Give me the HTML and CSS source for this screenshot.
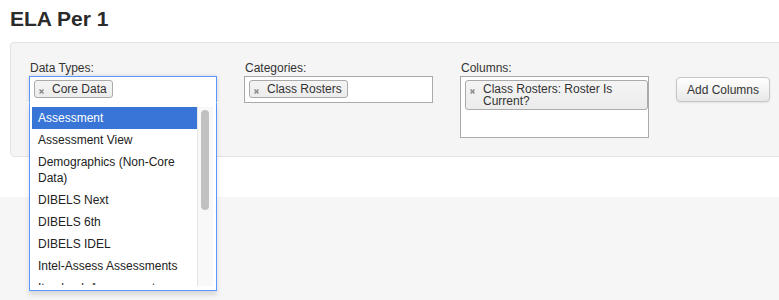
FILE: index.html
```html
<!doctype html>
<html>
<head>
<meta charset="utf-8">
<title>ELA Per 1</title>
<link rel="stylesheet" href="styles.css">
</head>
<body>
<div class="page">
    <h1 class="title">ELA Per 1</h1>
    <div class="panel">
        <div class="field">
            <label class="label">Data Types:</label>
            <div class="chosen open">
                <ul class="choices">
                    <li class="choice"><svg class="x" width="5" height="5" viewBox="0 0 5 5"><path d="M0.5 0.5L4.5 4.5M4.5 0.5L0.5 4.5"/></svg><span>Core Data</span></li>
                </ul>
                <div class="drop">
                    <ul class="results">
                        <li class="hl">Assessment</li>
                        <li>Assessment View</li>
                        <li>Demographics (Non-Core Data)</li>
                        <li>DIBELS Next</li>
                        <li>DIBELS 6th</li>
                        <li>DIBELS IDEL</li>
                        <li>Intel-Assess Assessments</li>
                        <li>Itembank Assessments</li>
                    </ul>
                    <div class="track"><div class="thumb"></div></div>
                </div>
            </div>
        </div>
        <div class="field">
            <label class="label">Categories:</label>
            <div class="chosen">
                <ul class="choices">
                    <li class="choice"><svg class="x" width="5" height="5" viewBox="0 0 5 5"><path d="M0.5 0.5L4.5 4.5M4.5 0.5L0.5 4.5"/></svg><span>Class Rosters</span></li>
                </ul>
            </div>
        </div>
        <div class="field">
            <label class="label">Columns:</label>
            <div class="chosen">
                <ul class="choices tall">
                    <li class="choice"><svg class="x" width="5" height="5" viewBox="0 0 5 5"><path d="M0.5 0.5L4.5 4.5M4.5 0.5L0.5 4.5"/></svg><span>Class Rosters: Roster Is Current?</span></li>
                </ul>
            </div>
        </div>
        <button class="btn">Add Columns</button>
    </div>
</div>
<div class="lower"></div>
</body>
</html>
```

FILE: styles.css
```css
* {margin:0; padding:0; list-style:none; box-sizing:border-box;}
html, body {overflow:hidden;}
body {background:#fff; font-family:"Liberation Sans", Arial, Helvetica, sans-serif; font-size:12px; color:#333;}

.page {padding:7px 0 40px 10px;}
.title {font-size:21px; line-height:24px; font-weight:bold; color:#2b2b2b; margin-bottom:11px;}

.panel {display:grid; grid-template-columns:188px 189px 189px auto; column-gap:27px; align-items:start; margin-right:-30px; padding:18px; background:#f5f5f5; border:1px solid #e3e3e3; border-radius:4px;}
.label {display:block; line-height:14px; margin:0 0 1px 1px; color:#333;}

.chosen {position:relative;}
.choices {min-height:27px; padding:3px 0 3px 4px; background:#fff; border:1px solid #aaa;}
.choices.tall {min-height:62px;}
.open .choices {border-color:#5897fb; border-bottom-color:#fff; box-shadow:0 0 4px rgba(0,0,0,.15);}

.choice {display:inline-flex; align-items:flex-start; max-width:100%; padding:2px 5px 2px 3px; line-height:12px; color:#333; background:linear-gradient(#f4f4f4, #ececec); border:1px solid #aaa; border-radius:3px;}
.choice .x {flex:none; margin:6px 8px 0 1px; stroke:#8a8a8a; stroke-width:1.5;}
.choice span {min-width:0;}

.drop {position:absolute; top:100%; left:0; right:0; z-index:10; display:flex; height:188px; padding:4px 3px 4px 2px; background:#fff; border:1px solid #5897fb; border-top:0; box-shadow:0 4px 5px rgba(0,0,0,.12);}
.results {flex:1; overflow:hidden; margin-bottom:1px; color:#222;}
.results li {padding:3px 6px; line-height:16px;}
.results li.hl {background:#3875d7; color:#fff;}
.track {flex:none; width:16px; padding:3px 4px 0 3px; background:#f8f8f8; border-left:1px solid #e6e6e6;}
.thumb {width:8px; height:100px; background:#c1c1c1; border-radius:4px;}

.btn {margin-top:16px; justify-self:start; height:25px; padding:0 10px; font:12px "Liberation Sans", Arial, Helvetica, sans-serif; color:#333; background:linear-gradient(#fff, #e8e8e8); border:1px solid #c6c6c6; border-radius:4px; box-shadow:0 1px 2px rgba(0,0,0,.08);}

.lower {height:200px; background:#f6f6f6;}
```
